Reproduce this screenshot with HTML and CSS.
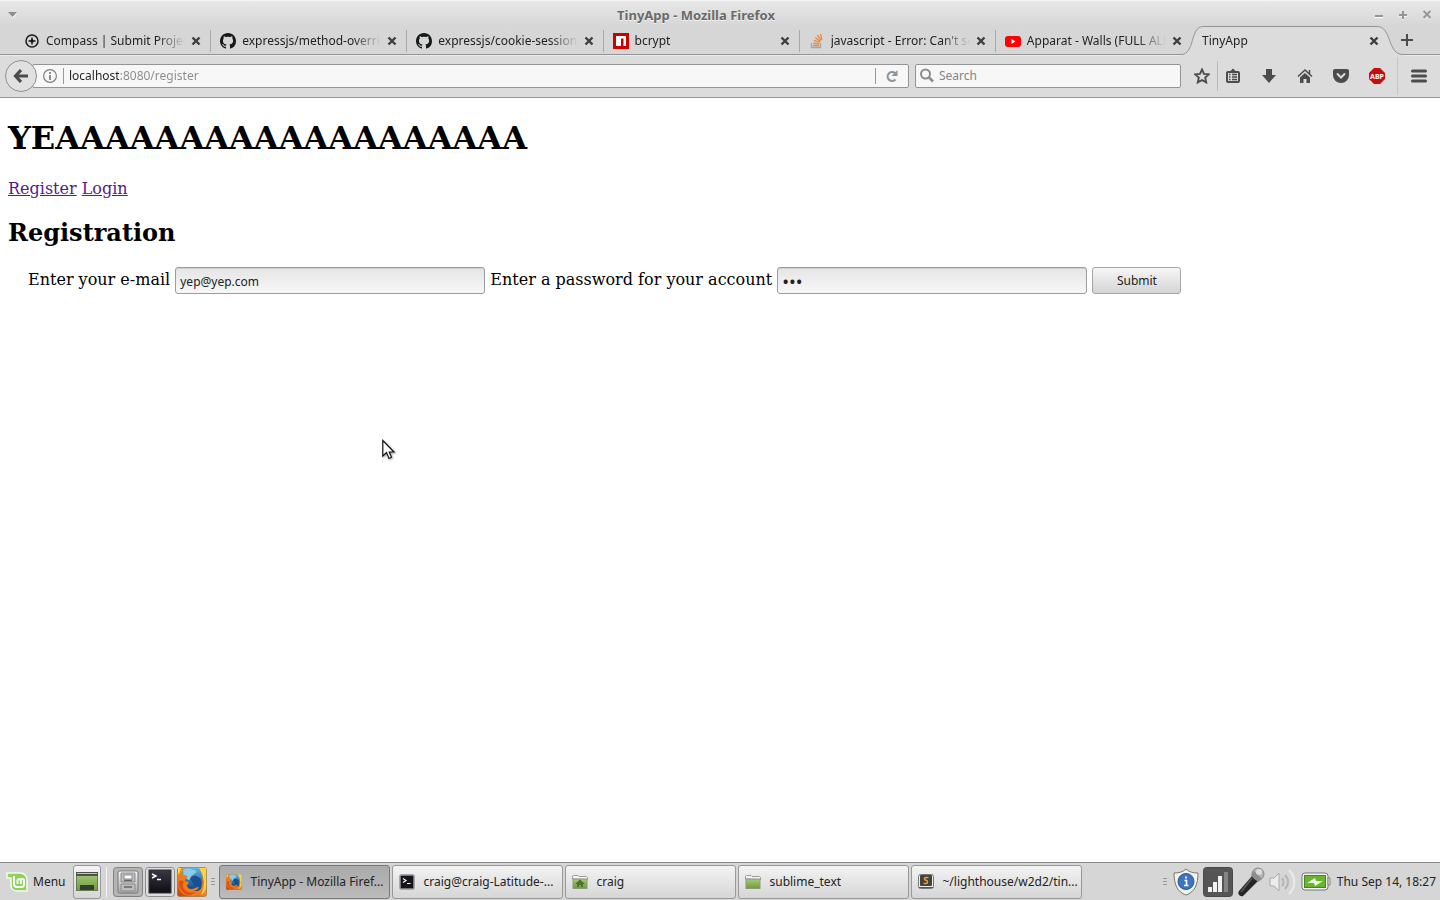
FILE: index.html
```html
<!DOCTYPE html>
<html lang="en">
<head>
<meta charset="utf-8">
<title>TinyApp</title>
<link rel="stylesheet" href="styles.css">
</head>
<body>
<svg class="defs" aria-hidden="true">
  <defs>
    <linearGradient id="steel" x1="0" y1="0" x2="0" y2="1"><stop offset="0" stop-color="#fafafa"/><stop offset="1" stop-color="#a8a8a8"/></linearGradient>
    <linearGradient id="green" x1="0" y1="0" x2="0" y2="1"><stop offset="0" stop-color="#a8ca7c"/><stop offset="1" stop-color="#6d9c3a"/></linearGradient>
    <linearGradient id="dark" x1="0" y1="0" x2="0" y2="1"><stop offset="0" stop-color="#3a3744"/><stop offset="1" stop-color="#0e0c14"/></linearGradient>
    <linearGradient id="flame" x1="0" y1="1" x2="1" y2="0"><stop offset="0" stop-color="#c93c0e"/><stop offset=".55" stop-color="#f28a1c"/><stop offset="1" stop-color="#ffe04a"/></linearGradient>
    <linearGradient id="ocean" x1="0" y1="0" x2="0" y2="1"><stop offset="0" stop-color="#5fb4e6"/><stop offset="1" stop-color="#123e7c"/></linearGradient>
    <symbol id="close" viewBox="0 0 10 10"><path d="M1.500 1.500l7 7M8.500 1.500l-7 7" stroke="#3c3f3f" stroke-width="2.400"/></symbol>
    <symbol id="github" viewBox="0 0 16 16"><path fill="#16181a" d="M8 0C3.58 0 0 3.58 0 8c0 3.54 2.29 6.53 5.47 7.59.4.07.55-.17.55-.38 0-.19-.01-.82-.01-1.49-2.01.37-2.53-.49-2.69-.94-.09-.23-.48-.94-.82-1.13-.28-.15-.68-.52-.01-.53.63-.01 1.08.58 1.23.82.72 1.21 1.87.87 2.33.66.07-.52.28-.87.51-1.07-1.78-.2-3.64-.89-3.64-3.95 0-.87.31-1.59.82-2.15-.08-.2-.36-1.02.08-2.12 0 0 .67-.21 2.2.82.64-.18 1.32-.27 2-.27s1.36.09 2 .27c1.53-1.04 2.2-.82 2.2-.82.44 1.1.16 1.92.08 2.12.51.56.82 1.27.82 2.15 0 3.07-1.87 3.75-3.65 3.95.29.25.54.73.54 1.48 0 1.07-.01 1.93-.01 2.2 0 .21.15.46.55.38A8.01 8.01 0 0 0 16 8c0-4.42-3.58-8-8-8z"/></symbol>
    <symbol id="firefox" viewBox="0 0 30 30">
      <rect x=".5" y=".5" width="29" height="29" rx="2" fill="url(#flame)" stroke="#8b6a3a" stroke-width=".6"/>
      <path d="M6 1h18l4 7 .5 10-5 6H10L5 15z" fill="url(#ocean)"/>
      <path d="M6 3c4-2 7-2 10 0 2-1 2 1 4 2-3 1-3 3-6 4 0 2-1 4-3 4-1-2-3-2-5-3 0-3 1-4 0-7z" fill="#8ccbea"/>
      <path d="M13 12c2-4 6-4 8-2 3 1 4 4 3 8-2 3-5 4-8 3 2-3 0-5-3-9z" fill="#1b4f93"/>
      <path d="M1 8c1-3 2-4 3-5 0 3 1 4 2 5 2 0 3 0 5 2-2 1-3 2-3 4 2 0 3 1 4 2l-2 2c0 4 4 5 8 3 2-1 4-1 4-1-1 3-4 4-6 4 4 1 8-1 9-4 2-3 2-9 0-13 3 4 4 10 2 15-2 5-7 7-12 7C5 29 1 23 1 16z" fill="#ee7c1b"/>
      <path d="M2 14c2-1 4 0 5 1-2 2-1 6 1 8 3 3 8 3 11 2-4 4-10 4-13 0-3-3-5-7-4-11z" fill="#e04f12"/>
      <path d="M22 1h7v20c-1 3-2 5-5 7 4-8 4-18-2-27z" fill="#ffd13c"/>
      <path d="M24 7c2 5 2 10 0 15-1 2-3 3-5 4 7 0 10-10 5-19z" fill="#f28a1c"/>
      <path d="M1 1h3L3 5 1 8z" fill="#ffd84b"/>
    </symbol>
    <symbol id="terminal" viewBox="0 0 30 30">
      <rect x=".5" y=".5" width="29" height="29" rx="3" fill="#ddd" stroke="#8c8c8c"/>
      <rect x="4" y="3" width="22" height="23" fill="url(#dark)" stroke="#333"/>
      <path d="M7 7l4 2-4 2M12 12.500h4" fill="none" stroke="#fff" stroke-width="1.400"/>
    </symbol>
    <symbol id="folder" viewBox="0 0 16 16">
      <path d="M.5 5V2l1-.5h4.500l1 1h7.500l1 1v2z" fill="#f6f6f6" stroke="#999"/>
      <rect x="1" y="5" width="14" height="9.500" fill="url(#green)" stroke="#8a9a78"/>
    </symbol>
  </defs>
</svg>

<header class="browser">
  <div class="titlebar">
    <svg width="10" height="8" viewBox="0 0 10 8"><path d="M1 2h8L5 7z" fill="#fff"/><path d="M0 1h9L4.500 6z" fill="#8e8e8e"/></svg>
    <span class="window-title">TinyApp - Mozilla Firefox</span>
    <div class="window-buttons">
      <button type="button" aria-label="Minimize"><svg width="10" height="10" viewBox="0 0 10 10"><path d="M1 7h8" stroke="#fff" stroke-width="2"/><path d="M1 6h8" stroke="#969696" stroke-width="2"/></svg></button>
      <button type="button" aria-label="Maximize"><svg width="10" height="10" viewBox="0 0 10 10"><path d="M1 6h8M5 2v8" stroke="#f2f2f2" stroke-width="2"/><path d="M1 5h8M5 1v8" stroke="#969696" stroke-width="2"/></svg></button>
      <button type="button" aria-label="Close"><svg width="10" height="10" viewBox="0 0 10 10"><path d="M1.500 2l7 7M8.500 2l-7 7" stroke="#f2f2f2" stroke-width="2"/><path d="M1.500 1l7 7M8.500 1l-7 7" stroke="#969696" stroke-width="2"/></svg></button>
    </div>
  </div>

  <nav class="tabs" aria-label="Tabs">
    <div class="tab">
      <svg class="favicon" viewBox="0 0 16 16"><circle cx="8" cy="8" r="6" fill="none" stroke="#17191b" stroke-width="1.500"/><path d="M8 4.500v7M4.500 8h7" stroke="#17191b" stroke-width="1.500"/><circle cx="8" cy="8" r="1.800" fill="#17191b"/></svg>
      <span class="tab-title">Compass | Submit Project</span>
      <button type="button" class="tab-close" aria-label="Close tab"><svg width="10" height="10"><use href="#close"/></svg></button>
    </div>
    <div class="tab">
      <svg class="favicon"><use href="#github"/></svg>
      <span class="tab-title">expressjs/method-override</span>
      <button type="button" class="tab-close" aria-label="Close tab"><svg width="10" height="10"><use href="#close"/></svg></button>
    </div>
    <div class="tab">
      <svg class="favicon"><use href="#github"/></svg>
      <span class="tab-title">expressjs/cookie-session:</span>
      <button type="button" class="tab-close" aria-label="Close tab"><svg width="10" height="10"><use href="#close"/></svg></button>
    </div>
    <div class="tab">
      <svg class="favicon" viewBox="0 0 16 16"><rect width="16" height="16" fill="#c00"/><path d="M3 3h10v10h-2.500V5.500H8V13H3z" fill="#fff"/></svg>
      <span class="tab-title">bcrypt</span>
      <button type="button" class="tab-close" aria-label="Close tab"><svg width="10" height="10"><use href="#close"/></svg></button>
    </div>
    <div class="tab">
      <svg class="favicon" viewBox="0 0 16 16"><path d="M2.500 10v4.500h9V10" fill="none" stroke="#a0a4a8" stroke-width="1.300"/><path d="M4 12.500h6M4.200 10.200l6 .7M4.800 7.400l5.800 2M6.300 4.500l5 4M8.500 2.200l3.600 5.300M11.600.8l1.200 6" stroke="#f08437" stroke-width="1.300"/></svg>
      <span class="tab-title">javascript - Error: Can't set headers</span>
      <button type="button" class="tab-close" aria-label="Close tab"><svg width="10" height="10"><use href="#close"/></svg></button>
    </div>
    <div class="tab">
      <svg class="favicon" viewBox="0 0 16 16"><rect x="0" y="3" width="16" height="11" rx="3" fill="#f00"/><path d="M6.500 6v5l4-2.500z" fill="#fff"/></svg>
      <span class="tab-title">Apparat - Walls (FULL ALBUM)</span>
      <button type="button" class="tab-close" aria-label="Close tab"><svg width="10" height="10"><use href="#close"/></svg></button>
    </div>
    <div class="tab active">
      <svg class="tab-shape" viewBox="0 0 222 30" preserveAspectRatio="none"><path d="M0 28.500C14 28.500 9 .5 22 .5H196C211 .5 206 28.500 222 28.500V30H0z" fill="#dcdcdc"/><path d="M0 28.500C14 28.500 9 .5 22 .5H196C211 .5 206 28.500 222 28.500" fill="none" stroke="#90969a"/></svg>
      <span class="tab-title">TinyApp</span>
      <button type="button" class="tab-close" aria-label="Close tab"><svg width="10" height="10"><use href="#close"/></svg></button>
    </div>
    <button type="button" class="new-tab" aria-label="New tab"><svg width="12" height="12" viewBox="0 0 12 12"><path d="M6 0v12M0 6h12" stroke="#4c4c4c" stroke-width="2"/></svg></button>
  </nav>

  <div class="toolbar">
    <button type="button" class="back" aria-label="Back"><svg width="16" height="16" viewBox="0 0 16 16"><path d="M8 2L2.500 8 8 14M3 8h12" fill="none" stroke="#4c4c4c" stroke-width="3.200"/></svg></button>
    <div class="urlbar">
      <svg width="14" height="14" viewBox="0 0 14 14"><circle cx="7" cy="7" r="6.400" fill="none" stroke="#808080" stroke-width="1.200"/><path d="M7 6v5M7 3v2" stroke="#808080" stroke-width="1.800"/></svg>
      <input class="url" type="text" aria-label="Address" value="localhost:8080/register">
      <button type="button" class="reload" aria-label="Reload"><svg width="14" height="14" viewBox="0 0 14 14"><path d="M10.500 10.500A4.500 4.500 0 1 1 10 4" fill="none" stroke="#8b959d" stroke-width="2.200"/><path d="M12.500 1v6h-6z" fill="#8b959d"/></svg></button>
    </div>
    <div class="searchbar">
      <svg width="16" height="16" viewBox="0 0 16 16"><circle cx="6.500" cy="6" r="4.500" fill="none" stroke="#8d8d8d" stroke-width="2"/><path d="M9.500 9l4.500 4.500" stroke="#8d8d8d" stroke-width="2.500"/></svg>
      <input type="search" aria-label="Search" placeholder="Search">
    </div>
    <div class="tools">
      <button type="button" class="star" aria-label="Bookmark"><svg width="16" height="16" viewBox="0 0 16 16"><path d="M8 1.500l2 4.400 4.800.5-3.600 3.200 1 4.800L8 12l-4.200 2.400 1-4.800L1.200 6.400 6 5.900z" fill="none" stroke="#4c4c4c" stroke-width="1.900"/></svg></button>
      <button type="button" class="list" aria-label="Bookmarks"><svg width="16" height="16" viewBox="0 0 16 16"><rect x="2" y="4" width="12" height="10" rx="1" fill="none" stroke="#4c4c4c" stroke-width="2"/><path d="M4.500 4L8 .5 11.500 4z" fill="#4c4c4c"/><path d="M4 6.500h1.500M7 6.500h5M4 9h1.500M7 9h5M4 11.500h1.500M7 11.500h5" stroke="#4c4c4c" stroke-width="1.300"/></svg></button>
      <button type="button" aria-label="Downloads"><svg width="16" height="16" viewBox="0 0 16 16"><path d="M5 1h6v6h4l-7 8-7-8h4z" fill="#4c4c4c"/></svg></button>
      <button type="button" aria-label="Home"><svg width="16" height="16" viewBox="0 0 16 16"><path d="M1 8.500l7-6.500 7 6.500M12.500 2v4" fill="none" stroke="#4c4c4c" stroke-width="1.500"/><path d="M3 9.500L8 5l5 4.500V15H9.500v-4h-3v4H3z" fill="#4c4c4c"/></svg></button>
      <button type="button" aria-label="Pocket"><svg width="16" height="16" viewBox="0 0 16 16"><path d="M2 1h12a2 2 0 0 1 2 2v4a8 8 0 0 1-16 0V3a2 2 0 0 1 2-2z" fill="#4c4c4c"/><path d="M4.500 6L8 9.500 11.500 6" fill="none" stroke="#dcdcdc" stroke-width="2" stroke-linecap="round"/></svg></button>
      <button type="button" aria-label="Adblock Plus"><svg width="16" height="16" viewBox="0 0 16 16"><path d="M5 0h6l5 5v6l-5 5H5l-5-5V5z" fill="#c70d0d"/><text class="abp" x="8" y="11" text-anchor="middle">ABP</text></svg></button>
      <button type="button" class="menu" aria-label="Open menu"><svg width="16" height="16" viewBox="0 0 16 16"><path d="M1.500 3h13M1.500 8h13M1.500 13h13" stroke="#4c4c4c" stroke-width="3" stroke-linecap="round"/></svg></button>
    </div>
  </div>
</header>

<main class="page">
  <h1>YEAAAAAAAAAAAAAAAAAAA</h1>
  <p class="links"><a href="#register">Register</a> <a href="#login">Login</a></p>
  <h2>Registration</h2>
  <form class="registration">
    <label for="email">Enter your e-mail</label>
    <input id="email" type="email" value="yep@yep.com">
    <label for="password">Enter a password for your account</label>
    <input id="password" type="password" value="yep">
    <button type="submit">Submit</button>
  </form>
  <svg class="pointer" width="14" height="22" viewBox="0 0 14 22"><path d="M.8 1.500v15.500l3.700-3.500 2.500 6 2.500-1.200L7.200 13h4.800z" fill="#fff" stroke="#111" stroke-width="1.200"/></svg>
</main>

<footer class="taskbar">
  <button type="button" class="start">
    <svg width="22" height="22" viewBox="0 0 22 22"><path d="M1 2h13c4 0 7 3 7 7v11H11c-4 0-6-3-6-6V7H1z" fill="#8ed15b" stroke="#f6faf2" stroke-width="1.500"/><path d="M8 5v8c0 2 1 3 3 3h5c1 0 2-1 2-3V9.500c0-2-3.200-2-3.200 0V13M14.800 9.500c0-2-3.300-2-3.300 0V13" fill="none" stroke="#fff" stroke-width="1.900"/></svg>
    Menu
  </button>
  <button type="button" class="desktop" aria-label="Show desktop"><svg width="22" height="20" viewBox="0 0 22 20"><rect x=".5" y=".5" width="21" height="18" fill="url(#green)" stroke="#6a7a58"/><path d="M0 0h22v4H0z" fill="#4d5347"/><path d="M1 1.500h20" stroke="#c4c4c4"/><rect x="4" y="13" width="14" height="5" fill="#34402a"/></svg></button>
  <div class="launchers">
    <button type="button" aria-label="Files"><svg width="30" height="30" viewBox="0 0 30 30"><rect x=".5" y=".5" width="29" height="29" rx="3" fill="#b4b4b4" stroke="#818181"/><rect x="5" y="4" width="20" height="22" rx="2" fill="url(#steel)" stroke="#777"/><path d="M8 6h14v9H8zM8 17h14v7H8z" fill="#bcbcbc" stroke="#8d8d8d"/><rect x="11" y="8" width="8" height="4" fill="#fff" stroke="#8791a0"/><path d="M11 13.500h8M11 20h8" stroke="#666" stroke-width="1.500"/></svg></button>
    <button type="button" aria-label="Terminal"><svg width="30" height="30"><use href="#terminal"/></svg></button>
    <button type="button" aria-label="Firefox"><svg width="30" height="30"><use href="#firefox"/></svg></button>
  </div>
  <svg class="grip" width="4" height="8" viewBox="0 0 4 8"><path d="M0 .5h4M0 3.500h4M0 6.500h4" stroke="#999"/></svg>
  <div class="windows">
    <button type="button" class="current"><svg width="16" height="16"><use href="#firefox"/></svg><span>TinyApp - Mozilla Firef...</span></button>
    <button type="button"><svg width="16" height="16" viewBox="0 0 16 16"><rect x=".5" y=".5" width="15" height="15" rx="2" fill="#777" stroke="#aaa"/><rect x="2" y="2" width="12" height="12" fill="#15131b"/><path d="M4 4.500l3 2-3 2M8 9.500h3.500" fill="none" stroke="#fff" stroke-width="1.200"/></svg><span>craig@craig-Latitude-...</span></button>
    <button type="button"><svg width="16" height="16" viewBox="0 0 16 16"><use href="#folder"/><path d="M8 5.500l5 4.500h-2v3H9v-2H7v2H5v-3H3z" fill="#4d7130"/></svg><span>craig</span></button>
    <button type="button"><svg width="16" height="16"><use href="#folder"/></svg><span>sublime_text</span></button>
    <button type="button"><svg width="16" height="16" viewBox="0 0 16 16"><rect x=".5" y=".5" width="15" height="14" rx="2" fill="#eee" stroke="#777"/><rect x="2" y="1" width="12" height="11" rx="1" fill="#45413e"/><path d="M10.500 3.500H8C6 3.500 6 6 8 6.300S10 9.500 8 9.500H5.500" fill="none" stroke="#f29a37" stroke-width="1.600"/><path d="M1 13.500h14" stroke="#555"/></svg><span>~/lighthouse/w2d2/tin...</span></button>
  </div>
  <div class="tray">
    <svg class="grip" width="4" height="8" viewBox="0 0 4 8"><path d="M0 .5h4M0 3.500h4M0 6.500h4" stroke="#999"/></svg>
    <svg width="26" height="28" viewBox="0 0 26 28"><path d="M13 1c3 3 7 4 12 4 0 11-3 19-12 22C4 24 1 16 1 5c5 0 9-1 12-4z" fill="#f3f3ee" stroke="#77786f"/><circle cx="13" cy="13.500" r="8" fill="#3d74bd" stroke="#29569a"/><path d="M13 8.500v2M11.500 12.500h2V17M11 17.500h4.500" fill="none" stroke="#fff" stroke-width="1.700"/></svg>
    <svg width="30" height="30" viewBox="0 0 30 30"><rect x=".5" y=".5" width="29" height="29" rx="3" fill="#555" stroke="#484848"/><path d="M5 20h4v5H5zM10 15h4v10h-4zM15 9h4v16h-4z" fill="#f2f2f2"/><path d="M21 5h4v20h-4z" fill="#858585"/></svg>
    <svg width="28" height="30" viewBox="0 0 28 30"><path d="M15 9l6 5L6 29c-3 1-6-2-4-5z" fill="#252525"/><path d="M15 11L4 25" stroke="#555" stroke-width="2"/><circle cx="21" cy="7" r="6" fill="#b4b4b4" stroke="#8a8a8a"/><path d="M14 8l7 7 4-3-8-8z" fill="#8d8d8d"/><circle cx="22" cy="5" r="3" fill="#ddd"/></svg>
    <svg width="28" height="26" viewBox="0 0 28 26"><path d="M1 9h4l5-5v18l-5-5H1z" fill="#ececec" stroke="#aaa"/><path d="M13 9c2 2 2 6 0 8M16 6c4 4 4 10 0 14" fill="none" stroke="#b5b5b5" stroke-width="2"/><path d="M20 1c7 7 7 17 0 24" fill="none" stroke="#e8e8e8" stroke-width="2.500"/></svg>
    <svg width="30" height="20" viewBox="0 0 30 20"><rect x="1" y="1" width="26" height="17" rx="3" fill="#f4f4f4" stroke="#777"/><path d="M27 6h2v7h-2z" fill="#ddd" stroke="#888"/><rect x="3.500" y="3.500" width="21" height="12" fill="#69b52d" stroke="#48851d"/><path d="M6 11l8-5 1 3h7l-8 5-1-3z" fill="#eef5e8"/></svg>
    <time datetime="18:27">Thu Sep 14, 18:27</time>
  </div>
</footer>
</body>
</html>
```
FILE: styles.css
```css
* { box-sizing: border-box; }

body {
  margin: 0;
  min-height: 100vh;
  display: flex;
  flex-direction: column;
  background: #fff;
  color: #000;
  font: 16px "DejaVu Serif", serif;
}

svg { display: block; flex: none; }
.defs { position: absolute; width: 0; height: 0; }

button {
  padding: 0;
  border: 0;
  background: none;
  color: #222;
  font: inherit;
}

input { min-width: 0; font: 12px "Noto Sans", sans-serif; }

.browser {
  background: #dcdcdc;
  border-bottom: 1px solid #949494;
  font: 12px "Noto Sans", sans-serif;
  color: #222;
}

/* Title bar */
.titlebar {
  height: 26px;
  display: flex;
  align-items: center;
  padding: 2px 8px 0;
  border-top: 1px solid #f4f4f4;
  background: linear-gradient(#e8e8e8, #d6d6d6);
}
.window-title {
  flex: 1;
  text-align: center;
  font-size: 13px;
  font-weight: bold;
  color: #6a6a6a;
  text-shadow: 0 1px #f2f2f2;
}
.window-buttons { display: flex; gap: 14px; }

/* Tab strip */
.tabs {
  height: 29px;
  display: flex;
  align-items: flex-end;
  padding-left: 15px;
  border-bottom: 1px solid #949494;
  background: #d6d6d6;
}
.tab {
  position: relative;
  flex: 1 1 0;
  min-width: 0;
  height: 28px;
  display: flex;
  align-items: center;
  gap: 6px;
  padding: 1px 10px 0 9px;
}
.tab:nth-child(-n+5)::after {
  content: "";
  position: absolute;
  right: 0;
  top: 4px;
  width: 1px;
  height: 22px;
  background: #a9a9a9;
}
.favicon { width: 16px; height: 16px; }
.tab-title {
  flex: 1;
  min-width: 0;
  overflow: hidden;
  white-space: nowrap;
  mask-image: linear-gradient(to right, #000 calc(100% - 28px), transparent);
}
.tab-close { position: relative; }
.tab.active { flex: 0 0 199px; padding: 1px 12px 0 10px; }
.active .tab-title { position: relative; }
.tab-shape { position: absolute; left: -11px; bottom: -2px; width: calc(100% + 23px); height: 30px; }
.new-tab { position: relative; flex: none; align-self: center; margin: 0 27px 0 10px; }

/* Navigation toolbar */
.toolbar {
  height: 42px;
  display: flex;
  align-items: center;
  padding: 0 5px 2px;
  border-top: 1px solid #eaeaea;
}
.back {
  position: relative;
  z-index: 1;
  flex: none;
  width: 32px;
  height: 32px;
  display: grid;
  place-items: center;
  border: 1px solid #8f8f8f;
  border-radius: 50%;
  background: #e1e1e1;
}
.urlbar, .searchbar {
  height: 24px;
  display: flex;
  align-items: center;
  border: 1px solid #949494;
  border-radius: 2px;
  background: #f7f7f7;
}
.urlbar { flex: 1; margin-left: -5px; padding-left: 10px; }
.urlbar input, .searchbar input { flex: 1; height: 16px; padding: 0; border: 0; outline: 0; background: none; }
.urlbar .url {
  margin-left: 6px;
  padding-left: 5px;
  border-left: 1px solid #999;
  background: linear-gradient(to right, #222 55px, #8a8a8a 55px) text;
  color: #8a8a8a;
  -webkit-text-fill-color: transparent;
}
.reload { height: 16px; padding: 0 9px; border-left: 1px solid #999; }
.searchbar { flex: 0 0 266px; gap: 4px; margin-left: 6px; padding-left: 3px; }
.searchbar input::placeholder { color: #858585; }
.tools { display: flex; align-items: center; margin-left: 13px; }
.tools button { display: grid; place-items: center; width: 36px; height: 30px; }
.tools .star { width: 24px; padding-right: 8px; border-right: 1px solid #bbb; }
.tools .list { width: 33px; padding-right: 3px; }
.tools .menu { width: 38px; height: 38px; padding-left: 5px; margin-left: 2px; border-left: 1px solid #c6c6c6; }
.abp { font: bold 7px "Noto Sans", sans-serif; fill: #fff; }

/* Page content */
.page { position: relative; flex: 1; padding: 0 8px; }
h1 { margin: 21px 0 22px; font-size: 32px; line-height: 38px; }
h2 { margin: 20px 0 18px; font-size: 24px; line-height: 28px; }
.links { margin: 0; line-height: 20px; }
a { color: #551a8b; }
.registration { padding: 1px 20px 0; line-height: 28px; }
.registration input {
  width: 310px;
  height: 27px;
  padding: 1px 4px 0;
  border: 1px solid #9c9c9c;
  border-radius: 3px;
  background: linear-gradient(#e5e5e5, #f7f7f7);
  box-shadow: inset 0 1px #d0d0d0;
  color: #222;
  vertical-align: middle;
}
.registration input[type="password"] { font-size: 18px; }
.registration button {
  width: 89px;
  height: 27px;
  border: 1px solid #a5a5a5;
  border-radius: 3px;
  background: linear-gradient(#f6f6f6, #d5d5d5);
  font: 12px "Noto Sans", sans-serif;
  vertical-align: middle;
}
.pointer { position: absolute; left: 382px; top: 341px; filter: drop-shadow(1px 1px 1px #0005); }

/* Desktop panel */
.taskbar {
  height: 38px;
  display: flex;
  align-items: center;
  padding: 0 4px 0 6px;
  border-top: 1px solid #8c8c8c;
  background: #d6d6d6;
  color: #222;
  font: 12px "Noto Sans", sans-serif;
}
.start { display: flex; align-items: center; gap: 5px; }
.desktop, .windows button {
  height: 34px;
  border: 1px solid #999;
  border-radius: 3px;
  background: linear-gradient(#f3f3f3, #d6d6d6);
}
.desktop { flex: none; width: 28px; display: grid; place-items: center; margin-left: 8px; }
.launchers { display: flex; gap: 2px; margin-left: 5px; padding-left: 6px; border-left: 1px solid #f2f2f2; }
.taskbar .grip { margin: 0 4px; }
.windows { flex: 1; min-width: 0; display: flex; gap: 2px; }
.windows button {
  flex: 0 1 171px;
  min-width: 0;
  display: flex;
  align-items: center;
  gap: 8px;
  padding: 0 2px 0 6px;
}
.windows .current { border-color: #777; background: linear-gradient(#aaa, #bbb); }
.windows span { overflow: hidden; white-space: nowrap; }
.tray { flex: none; display: flex; align-items: center; gap: 4px; }
.tray .grip { margin: 0 2px 0 0; }
.tray time { margin-left: 2px; white-space: nowrap; }
```
